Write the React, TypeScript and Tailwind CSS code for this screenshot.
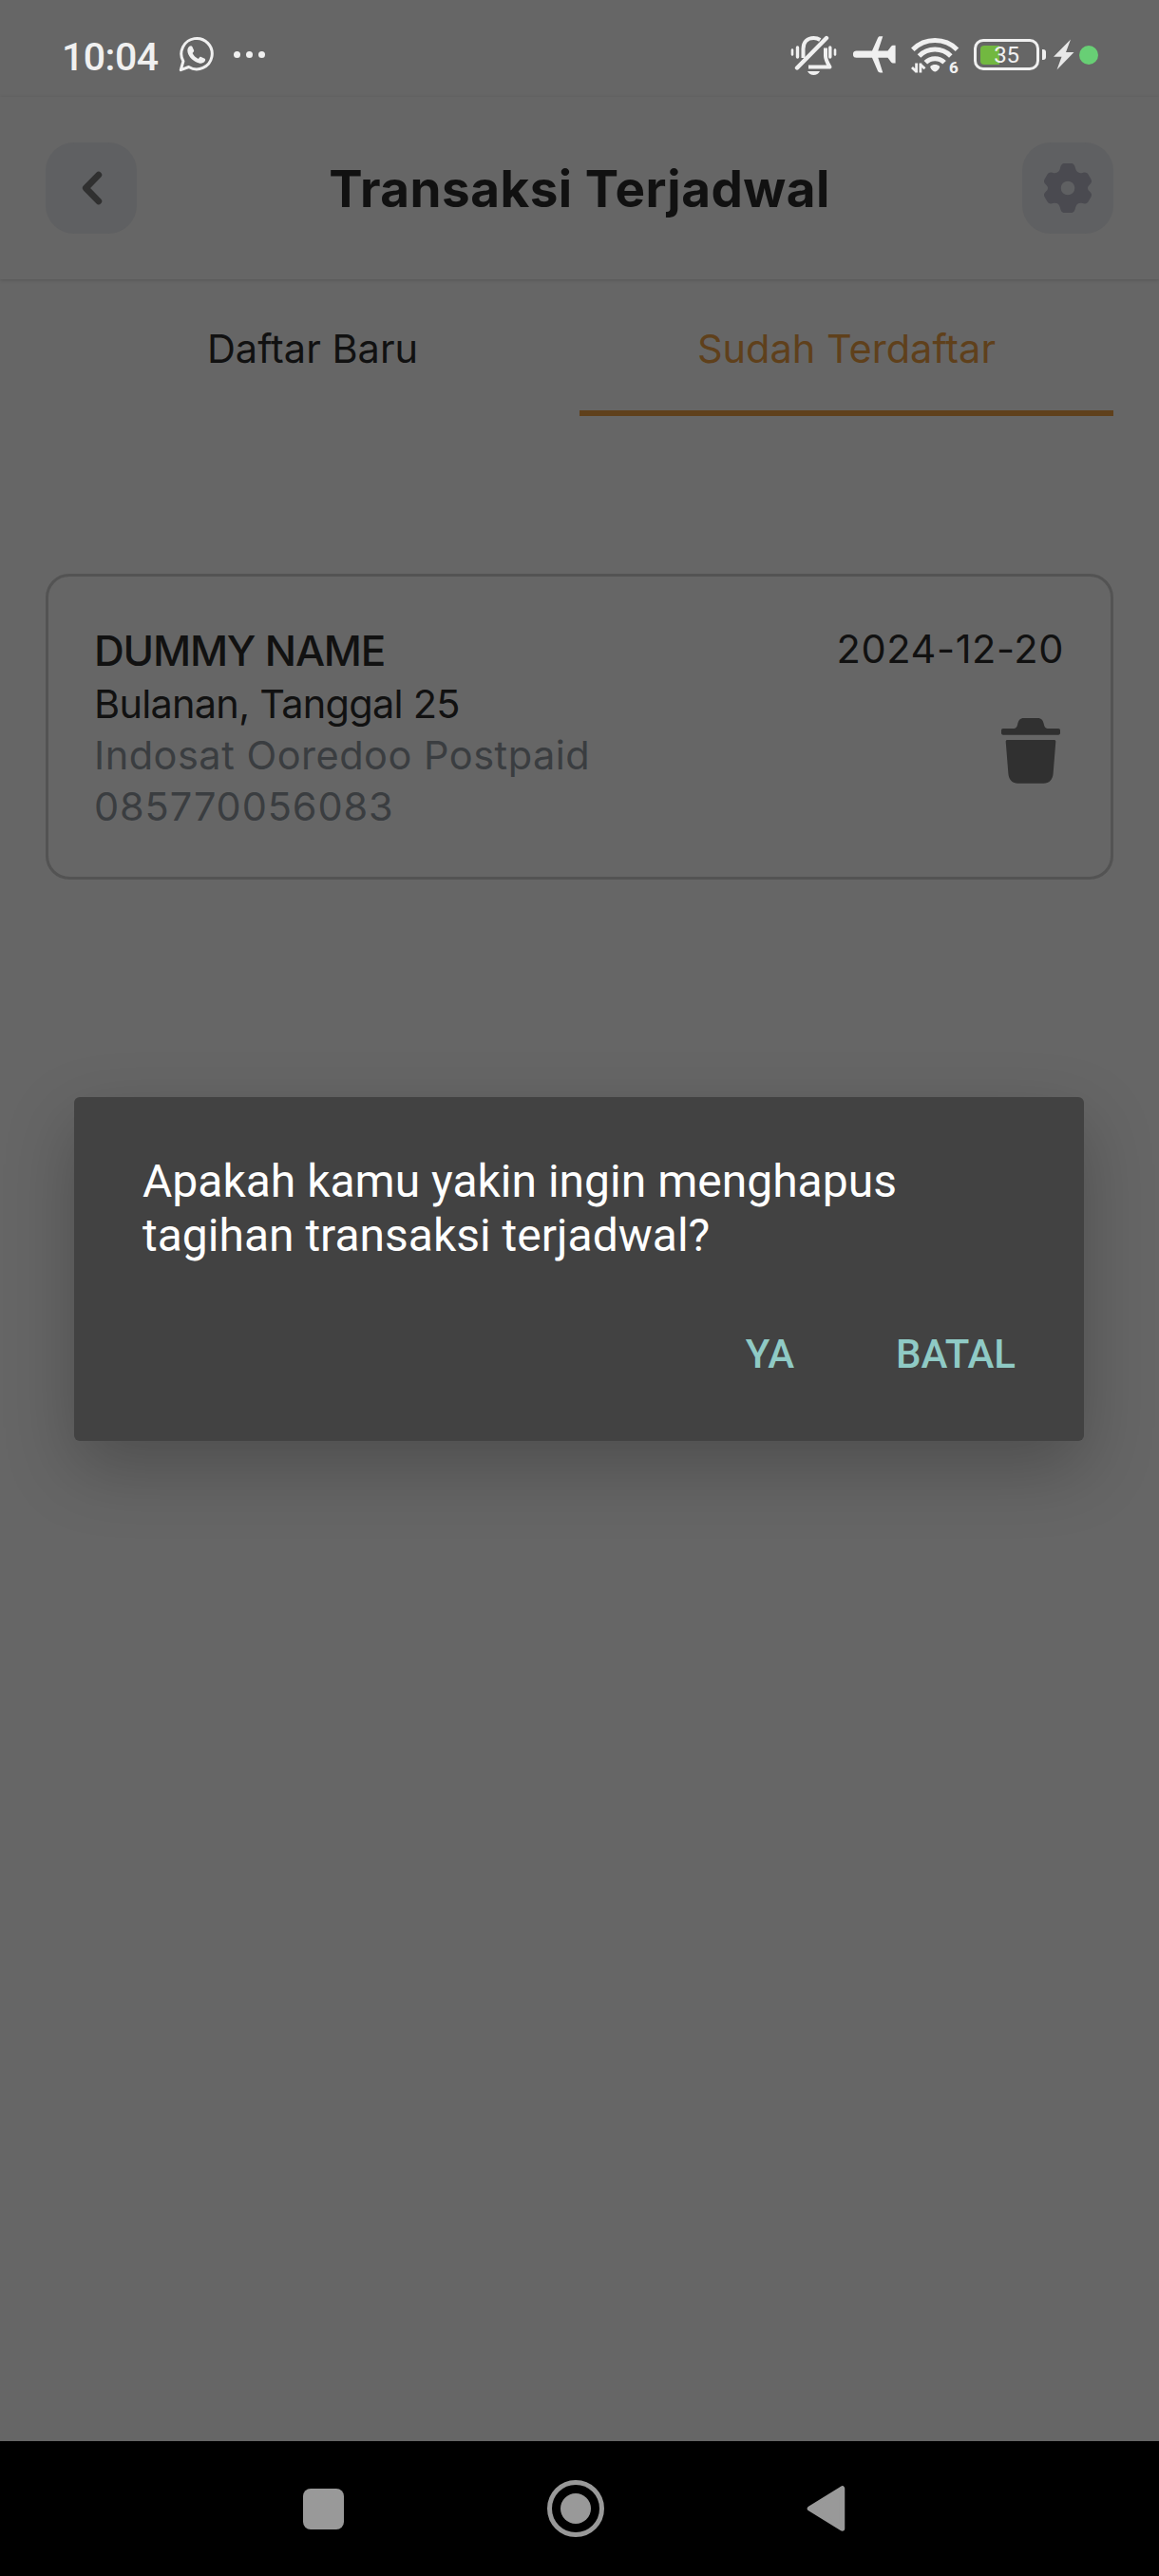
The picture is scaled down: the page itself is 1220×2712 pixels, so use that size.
import React from "react";

const LIGHT = "#f0f0f0";

function WhatsApp() {
  return (
    <svg className="h-[38px] w-[38px]" viewBox="188 38.5 38 38" fill="none">
      <path d="M190.3 74.2l2.6-9.2a16.2 16.2 0 1 1 5.8 6z" stroke={LIGHT} strokeWidth="3" strokeLinejoin="round" />
      <path
        d="M199.3 49.3c1.100-.9 2.500-.8 3 .2l1.800 4c.3.8-.2 1.500-1.500 3 1.200 2.600 3.300 4.700 6.200 5.900 1.500-2 2-2.400 2.900-2l3.900 1.900c.8.5.7 1.600 0 2.800-1.100 1.700-3.600 2.500-6 1.900-6-1.500-10.500-6-12-11.200-.7-2.700 0-5.100 1.700-6.500z"
        fill={LIGHT}
      />
    </svg>
  );
}

function Muted() {
  return (
    <svg className="h-[44px] w-[50px]" viewBox="831 37 50 44" fill="none" stroke={LIGHT} strokeLinecap="round">
      <path d="M845.500 61V51.500C845.500 44 850 40 856.500 40c2.800 0 5 .8 6.800 2M869 50.500v8.500c0 3.500 1.500 6.500 4.500 11.500H851" strokeWidth="4" strokeLinejoin="round" strokeLinecap="butt" />
      <path d="M839 71.500L870 40" strokeWidth="4.400" />
      <path d="M850 75h13c-1.400 2.700-3.600 4-6.500 4s-5.100-1.300-6.500-4z" fill={LIGHT} stroke="none" />
      <path d="M839.500 50v10M873.800 50v10" strokeWidth="3.400" />
      <path d="M834 52.500v5M879 52.500v5" strokeWidth="2.600" />
    </svg>
  );
}

function Plane() {
  return (
    <svg className="h-[40px] w-[46px]" viewBox="898 38 46 40">
      <path d="M901.500 53.500h16.500l6-13.500c.6-1.300 1.500-1.700 2.600-1.700h2.700l-5 15.200h10.200l3.200-4.300c.8-1.200 1.800-1.500 2.900-1.500h2v18.700h-2c-1.100 0-2.100-.3-2.900-1.500l-3.200-4.200h-10.200l5 15.700h-2.700c-1.100 0-2-.5-2.600-1.700l-6-14h-16.500a3.600 3.600 0 0 1 0-7.200z" fill={LIGHT} />
    </svg>
  );
}

function Wifi() {
  return (
    <svg className="h-[46px] w-[52px]" viewBox="958 38.500 52 46" fill="none" stroke={LIGHT}>
      <path d="M960.800 52.700a33 33 0 0 1 46.700 0" strokeWidth="5" />
      <path d="M967.500 59.500a23.500 23.500 0 0 1 33.300 0" strokeWidth="5" />
      <path d="M974.300 66.300a14 14 0 0 1 19.800 0" strokeWidth="5" />
      <path d="M979.200 70.500c2.800-2.600 7.200-2.600 10 0 0 2-2.200 4.800-5 5.500-2.800-.7-5-3.500-5-5.500z" fill={LIGHT} stroke="none" />
      <path d="M964.600 67v10M968.900 77V67M960 71.500l4.600 4.500M968.900 68.500l4.600 4.300" strokeWidth="2.800" />
      <text x="999" y="77" fontFamily="Roboto, sans-serif" fontSize="17" fontWeight="800" fill={LIGHT} stroke="none">6</text>
    </svg>
  );
}

function Bolt() {
  return (
    <svg className="h-[34px] w-[22px]" viewBox="1109 41.500 22 34">
      <path d="M1127 42l-18 18.200h8.500L1112.500 74l18-18.600h-8.500z" fill="#e8e8e8" />
    </svg>
  );
}

function StatusBar() {
  return (
    <div className="flex h-[102px] items-start pr-[64px] pl-[65px] font-['Roboto',sans-serif]">
      <span className="mt-[36px] w-[103px] text-[41px] leading-[48px] font-medium tracking-[-0.5px] text-[#f0f0f0]">10:04</span>
      <div className="mt-[38px] ml-[20px]"><WhatsApp /></div>
      <div className="mt-[54px] ml-[20px] flex gap-[6.500px]">
        <i className="size-[6.500px] rounded-full bg-[#f0f0f0]" />
        <i className="size-[6.500px] rounded-full bg-[#f0f0f0]" />
        <i className="size-[6.500px] rounded-full bg-[#f0f0f0]" />
      </div>
      <div className="ml-auto flex items-start">
        <div className="mt-[37px] mr-[17px]"><Muted /></div>
        <div className="mt-[38px] mr-[14px]"><Plane /></div>
        <div className="mt-[38px] mr-[15px]"><Wifi /></div>
        <div className="relative mt-[41px] flex h-[33px] w-[69px] items-center rounded-[10px] border-[3.500px] border-[#f0f0f0] pl-[4px]">
          <div className="h-[20px] w-[20px] rounded-l-[4px] bg-[#72b840]" />
          <span className="absolute inset-x-0 top-0 text-center text-[24px] leading-[28px] tracking-[-0.3px] text-[#f0f0f0]">35</span>
        </div>
        <div className="mt-[52px] mr-[8px] ml-[3px] h-[11px] w-[4px] rounded-r-[3px] bg-[#f0f0f0]" />
        <div className="mt-[41px] mr-[5px]"><Bolt /></div>
        <div className="mt-[48px] size-[20px] rounded-full bg-[#68cf75]" />
      </div>
    </div>
  );
}

function Header() {
  return (
    <header className="mb-[3px] flex h-[192px] items-center justify-between bg-[#666] px-[48px] shadow-[0_1px_4px_rgba(0,0,0,0.16)]">
      <button className="flex size-[96px] items-center justify-center rounded-[30px] bg-[#5f6062]">
        <svg className="size-[96px]" viewBox="48 150 96 96" fill="none">
          <path d="M103.800 184.200L90.300 198l13.500 13.800" stroke="#303030" strokeWidth="6.800" strokeLinecap="round" strokeLinejoin="round" />
        </svg>
      </button>
      <h1 className="pt-[2px] text-[53px] leading-[64px] font-bold tracking-[0.480px] whitespace-nowrap text-[#111]">Transaksi Terjadwal</h1>
      <button className="flex size-[96px] items-center justify-center rounded-[30px] bg-[#5f6062]">
        <svg className="size-[96px]" viewBox="1076 150 96 96">
          <path
            fillRule="evenodd"
            fill="#4a4a50"
            d="M1121 172h6c3.300 0 4.300 2 5 5 .8 4 3.500 5.800 7.500 4.900 3.500-.8 5-.2 6.500 2.500l2.200 3.800c1.500 2.700 1 4-1.300 6.200-2.600 2.400-2.600 4.800 0 7.200 2.300 2.200 2.800 3.500 1.300 6.200l-2.200 3.800c-1.500 2.700-3 3.300-6.500 2.500-4-.9-6.700.9-7.500 4.900-.7 3-1.700 5-5 5h-6c-3.300 0-4.300-2-5-5-.8-4-3.500-5.800-7.500-4.900-3.500.8-5 .2-6.500-2.500l-2.200-3.800c-1.500-2.700-1-4 1.300-6.200 2.600-2.400 2.600-4.800 0-7.200-2.300-2.200-2.800-3.500-1.300-6.200l2.200-3.800c1.500-2.700 3-3.300 6.500-2.500 4 .9 6.700-.9 7.500-4.900.7-3 1.700-5 5-5zM1124 190.700a7.300 7.300 0 1 0 0 14.600 7.300 7.300 0 0 0 0-14.600z"
          />
        </svg>
      </button>
    </header>
  );
}

function Tabs() {
  return (
    <nav className="mx-[48px] grid h-[141px] grid-cols-2 text-center text-[41.500px] leading-[50px]">
      <div className="pt-[45px] text-[#111]">Daftar Baru</div>
      <div className="border-b-[6px] border-[#5f401b] pt-[45px] text-[#5f401b]">Sudah Terdaftar</div>
    </nav>
  );
}

function BillCard() {
  return (
    <section className="mx-[48px] mt-[166px] flex h-[322px] justify-between rounded-[25px] border-[3px] border-[#535353] pt-[50px] pr-[49px] pl-[48px]">
      <div className="text-[41.500px] leading-[54px] whitespace-nowrap">
        <p className="text-[44px] leading-[56px] font-medium tracking-[-1.200px] text-[#111]">DUMMY NAME</p>
        <p className="mt-px tracking-[-0.750px] text-[#111]">Bulanan, Tanggal 25</p>
        <p className="tracking-[0.500px] text-[#3a3d40]">Indosat Ooredoo Postpaid</p>
        <p className="tracking-[0.880px] text-[#3a3d40]">085770056083</p>
      </div>
      <div className="flex flex-col items-end">
        <p className="-mt-px text-[41.500px] leading-[54px] tracking-[0.600px] text-[#111]">2024-12-20</p>
        <svg className="mt-[46px] mr-[4px] h-[69px] w-[62px]" viewBox="1054 756 62 69" fill="#303030">
          <path d="M1056 767h11.500c2.300-.5 3.200-2 3.600-4.300.8-4.200 2.500-6.700 6.800-6.700h14.200c4.300 0 6 2.500 6.800 6.700.4 2.300 1.300 3.800 3.600 4.300h11.500c1.400 0 2 .8 2 2v2.600c0 1.300-.6 2.100-2 2.100h-58c-1.400 0-2-.8-2-2.100V769c0-1.200.6-2 2-2zM1060.500 779h49c1.300 0 1.900.8 1.800 2l-2.700 33.500c-.5 6.300-4.200 10.200-10.200 10.200h-26.800c-6 0-9.700-3.900-10.200-10.200L1058.700 781c-.1-1.200.5-2 1.800-2z" />
        </svg>
      </div>
    </section>
  );
}

function Dialog() {
  return (
    <div
      role="dialog"
      className="absolute top-[1155px] left-[78px] flex h-[362px] w-[1063px] flex-col rounded-[6px] bg-[#424242] px-[72px] pt-[60px] font-['Roboto',sans-serif] shadow-[0_28px_75px_rgba(0,0,0,0.24)]"
    >
      <p className="text-[48px] leading-[57px] whitespace-nowrap text-white">
        Apakah kamu yakin ingin menghapus
        <br />
        tagihan transaksi terjadwal?
      </p>
      <div className="mt-[72px] flex justify-end gap-[107px] text-[42px] leading-[50px] font-medium text-[#8fcac5]">
        <button>YA</button>
        <button>BATAL</button>
      </div>
    </div>
  );
}

function NavBar() {
  return (
    <div className="flex h-[142px] items-center bg-black pl-[319px]">
      <div className="size-[43px] rounded-[8px] bg-[#999]" />
      <div className="ml-[214px] flex size-[60px] items-center justify-center rounded-full border-[5px] border-[#999]">
        <div className="size-[32px] rounded-full bg-[#999]" />
      </div>
      <svg className="ml-[213px] h-[50px] w-[42px]" viewBox="849 2616 42 50">
        <path d="M852.500 2641L886.500 2620v42z" fill="#999" stroke="#999" strokeWidth="5.500" strokeLinejoin="round" />
      </svg>
    </div>
  );
}

export default function App() {
  return (
    <main className="relative flex h-[2712px] w-[1220px] flex-col overflow-hidden bg-[#666] font-['Inter','Liberation_Sans',sans-serif]">
      <StatusBar />
      <Header />
      <Tabs />
      <BillCard />
      <div className="flex-1" />
      <NavBar />
      <Dialog />
    </main>
  );
}
